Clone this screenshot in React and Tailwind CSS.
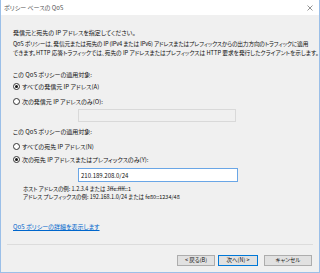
import React from 'react';

const font = { fontFamily: '"Noto Sans CJK JP", "Noto Sans", sans-serif' };

const Radio = ({ checked, label }) => (
  <div className="flex items-center h-[10px] gap-[2px]">
    <span className="w-[7px] h-[7px] rounded-full border border-[#333] bg-white flex items-center justify-center">
      {checked && <span className="w-[3px] h-[3px] rounded-full bg-[#111]" />}
    </span>
    <span>{label}</span>
  </div>
);

const Btn = ({ children, primary, w }) => (
  <div
    className={`h-[11px] flex items-center justify-center bg-[#e1e1e1] border text-[5.5px] ${w} ${
      primary ? 'border-[#0078d7]' : 'border-[#adadad]'
    }`}
  >
    {children}
  </div>
);

export default function App() {
  return (
    <div
      className="w-[320px] h-[273px] bg-[#f0f0f0] border-l border-r border-b border-[#9bbfe8] flex flex-col text-[6px] text-[#111] [font-feature-settings:'palt'] overflow-hidden"
      style={font}
    >
      {/* Title bar */}
      <div className="h-[15px] bg-white flex items-center justify-between pl-[3px] pr-[6px] text-[#555]">
        <span>ポリシー ベースの QoS</span>
        <svg width="6" height="6" viewBox="0 0 6 6" className="stroke-[#777]">
          <path d="M0.5 0.5L5.5 5.5M5.5 0.5L0.5 5.5" strokeWidth="0.8" />
        </svg>
      </div>

      <div className="flex flex-col pl-[12px] pr-[4px]">
        <div className="h-[10px] leading-[10px] mt-[13px]">発信元と宛先の IP アドレスを指定してください。</div>
        <div className="h-[9px] leading-[9px] mt-[1px] whitespace-nowrap text-[5.7px] tracking-[-0.15px]">
          QoS ポリシーは、発信元または宛先の IP (IPv4 または IPv6) アドレスまたはプレフィックスからの出力方向のトラフィックに適用
        </div>
        <div className="h-[9px] leading-[9px] whitespace-nowrap text-[5.7px]">
          できます。HTTP 応答トラフィックでは、宛先の IP アドレスまたはプレフィックスは HTTP 要求を発行したクライアントを示します。
        </div>

        <div className="h-[10px] leading-[10px] mt-[13px]">この QoS ポリシーの適用対象:</div>
        <div className="mt-[1px]">
          <Radio checked label="すべての発信元 IP アドレス(A)" />
        </div>
        <div className="mt-[5px]">
          <Radio label="次の発信元 IP アドレスのみ(O):" />
        </div>
        <div className="mt-[3px] ml-[65px] w-[158px] h-[13px] border border-[#d9d9d9] bg-[#f0f0f0]" />

        <div className="h-[10px] leading-[10px] mt-[5px]">この QoS ポリシーの適用対象:</div>
        <div className="mt-[4px]">
          <Radio label="すべての宛先 IP アドレス(N)" />
        </div>
        <div className="mt-[3px]">
          <Radio checked label="次の宛先 IP アドレスまたはプレフィックスのみ(Y):" />
        </div>
        <div className="mt-[4px] ml-[65px] w-[160px] h-[14px] border border-[#6aa6e6] bg-white flex items-center pl-[2px] text-[6px]">
          210.189.208.0/24
        </div>

        <div className="ml-[10px] mt-[3px] text-[5.5px]">
          <div className="h-[8px] leading-[8px]">ホスト アドレスの例: 1.2.3.4 または 3ffe:ffff::1</div>
          <div className="h-[8px] leading-[8px]">アドレス プレフィックスの例: 192.168.1.0/24 または fe80::1234/48</div>
        </div>

        <div className="h-[10px] leading-[10px] mt-[21px] text-[#0066cc] underline">QoS ポリシーの詳細を表示します</div>
      </div>

      <div className="mt-[12px] mx-[6px] h-px bg-[#dcdcdc]" />

      <div className="mt-[10px] flex pr-[7px] justify-end">
        <Btn w="w-[38px]">&lt; 戻る(B)</Btn>
        <div className="w-[3px]" />
        <Btn w="w-[40px]" primary>
          次へ(N) &gt;
        </Btn>
        <div className="w-[6px]" />
        <Btn w="w-[48px]">キャンセル</Btn>
      </div>
    </div>
  );
}
